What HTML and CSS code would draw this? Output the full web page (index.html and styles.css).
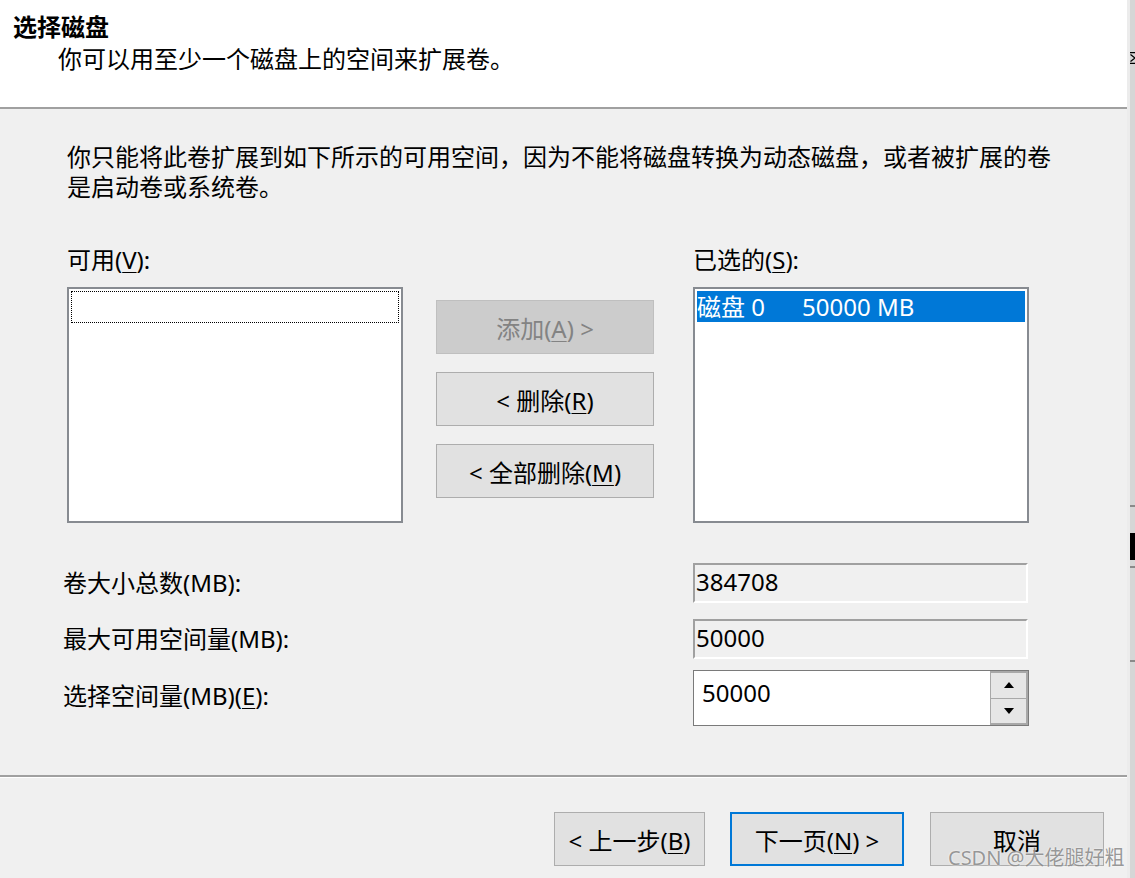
FILE: index.html
```html
<!DOCTYPE html>
<html lang="zh-CN">
<head>
  <meta charset="UTF-8">
  <title>扩展卷向导 - 选择磁盘</title>
  <link rel="stylesheet" href="styles.css">
</head>
<body>

  <div class="screen">
    <div class="dialog">

      <div class="header">
        <div class="title">选择磁盘</div>
        <div class="subtitle">你可以用至少一个磁盘上的空间来扩展卷。</div>
      </div>

      <div class="content">
        <p class="intro">你只能将此卷扩展到如下所示的可用空间，因为不能将磁盘转换为动态磁盘，或者被扩展的卷<br>是启动卷或系统卷。</p>

        <div class="picker">
          <div class="col">
            <div class="label">可用(<u>V</u>):</div>
            <div class="listbox">
              <div class="focus-item"></div>
            </div>
          </div>

          <div class="mid-buttons">
            <button class="btn disabled">添加(<u>A</u>) &gt;</button>
            <button class="btn">&lt; 删除(<u>R</u>)</button>
            <button class="btn">&lt; 全部删除(<u>M</u>)</button>
          </div>

          <div class="col">
            <div class="label">已选的(<u>S</u>):</div>
            <div class="listbox">
              <div class="item selected"><span class="disk">磁盘 0</span>50000 MB</div>
            </div>
          </div>
        </div>

        <div class="fields">
          <div class="field-row">
            <div class="field-label">卷大小总数(MB):</div>
            <div class="readonly">384708</div>
          </div>
          <div class="field-row">
            <div class="field-label">最大可用空间量(MB):</div>
            <div class="readonly">50000</div>
          </div>
          <div class="field-row spin-row">
            <div class="field-label">选择空间量(MB)(<u>E</u>):</div>
            <div class="spinner">
              <div class="spin-value">50000</div>
              <div class="spin-buttons">
                <div class="spin-btn"><span class="tri up"></span></div>
                <div class="spin-btn"><span class="tri down"></span></div>
              </div>
            </div>
          </div>
        </div>
      </div>

      <div class="footer">
        <button class="btn nav">&lt; 上一步(<u>B</u>)</button>
        <button class="btn nav default">下一页(<u>N</u>) &gt;</button>
        <button class="btn nav cancel">取消</button>
      </div>

      <div class="watermark">CSDN @大佬腿好粗</div>
    </div>

    <!-- 右侧露出的另一个窗口 -->
    <div class="edge">
      <svg class="edge-arrow" width="6" height="12" viewBox="0 0 6 12">
        <path d="M0 0.5H6M0.5 2.5L5 6L0.5 9.5M0 11.5H6" fill="none" stroke="#000" stroke-width="1.3"/>
      </svg>
      <span class="edge-line l1"></span>
      <span class="edge-block"></span>
      <span class="edge-line l2"></span>
      <span class="edge-line l3"></span>
    </div>
  </div>

</body>
</html>
```

FILE: styles.css
```css
html, body {
  margin: 0;
  padding: 0;
}

body {
  font-family: "Noto Sans", "Noto Sans CJK SC", sans-serif;
  font-size: 24px;
  color: #000;
  background: #f0f0f0;
}

u {
  text-underline-offset: 3px;
  text-decoration-thickness: 1px;
}

.screen {
  display: flex;
  width: 1135px;
  height: 878px;
  overflow: hidden;
}

.dialog {
  position: relative;
  width: 1127px;
  height: 878px;
  background: #f0f0f0;
  display: flex;
  flex-direction: column;
}

/* 顶部白色标题区 */
.header {
  height: 109px;
  box-sizing: border-box;
  background: #fff;
  border-bottom: 2px solid #a0a0a0;
  padding-top: 12px;
}

.title {
  font-weight: bold;
  padding-left: 13px;
  line-height: 30px;
}

.subtitle {
  padding-left: 58px;
  margin-top: 2px;
  line-height: 30px;
}

.content {
  flex: 1;
  padding-left: 67px;
  border-bottom: 2px solid #a0a0a0;
  box-shadow: 0 1px 0 #fff;
}

.intro {
  margin: 33px 0 0 0;
  line-height: 30px;
}

.picker {
  display: flex;
  margin-top: 43px;
}

.col {
  width: 336px;
}

.label {
  line-height: 30px;
  margin-bottom: 12px;
}

.listbox {
  width: 336px;
  height: 236px;
  box-sizing: border-box;
  border: 2px solid #878b91;
  background: #fff;
  padding: 2px;
}

.focus-item {
  height: 32px;
  border: 1px dotted #000;
  box-sizing: border-box;
}

.item {
  height: 31px;
  line-height: 31px;
  white-space: nowrap;
}

.item.selected {
  background: #0078d7;
  color: #fff;
}

.disk {
  display: inline-block;
  width: 105px;
}

.mid-buttons {
  display: flex;
  flex-direction: column;
  gap: 18px;
  margin: 55px 39px 0 33px;
}

.btn {
  font-family: inherit;
  font-size: 24px;
  width: 218px;
  height: 54px;
  padding: 0;
  background: #e1e1e1;
  border: 1px solid #adadad;
  color: #000;
  cursor: pointer;
}

.btn.disabled {
  background: #cccccc;
  border-color: #bfbfbf;
  color: #838383;
  cursor: default;
}

/* 下方数值区 */
.fields {
  margin-top: 40px;
  margin-left: -4px;
}

.field-row {
  display: flex;
  align-items: center;
  margin-bottom: 16px;
}

.field-row.spin-row {
  margin-top: -5px;
}

.field-label {
  width: 630px;
  line-height: 30px;
}

.spin-row .field-label {
  margin-top: -4px;
}

.readonly {
  width: 335px;
  height: 40px;
  box-sizing: border-box;
  border-top: 2px solid #a0a0a0;
  border-left: 2px solid #a0a0a0;
  border-right: 2px solid #fff;
  border-bottom: 2px solid #fff;
  padding-left: 1px;
  line-height: 34px;
}

.spinner {
  display: flex;
  width: 336px;
  height: 56px;
  box-sizing: border-box;
  border: 1px solid #7a7a7a;
  background: #fff;
}

.spin-value {
  flex: 1;
  padding-left: 8px;
  line-height: 44px;
}

.spin-buttons {
  width: 35px;
  border: 2px solid #a8a8a8;
  border-left-width: 1px;
  display: flex;
  flex-direction: column;
  background: #a8a8a8;
  gap: 1px;
}

.spin-btn {
  flex: 1;
  background: #e6e6e6;
  display: flex;
  align-items: center;
  justify-content: center;
}

.tri {
  width: 0;
  height: 0;
  border-left: 5px solid transparent;
  border-right: 5px solid transparent;
}

.tri.up {
  border-bottom: 6px solid #000;
}

.tri.down {
  border-top: 6px solid #000;
}

/* 底部按钮 */
.footer {
  display: flex;
  justify-content: flex-end;
  padding: 34px 23px 12px 0;
  margin-top: 1px;
}

.btn.nav {
  width: 151px;
  margin-left: 25px;
}

.btn.nav.default {
  width: 174px;
  border: 2px solid #0078d7;
}

.btn.nav.cancel {
  width: 174px;
  margin-left: 26px;
}

.watermark {
  position: absolute;
  left: 948px;
  top: 845px;
  font-size: 20px;
  line-height: 26px;
  color: rgba(120, 120, 120, 0.75);
  text-shadow: 0 0 2px #fff;
  white-space: nowrap;
}

/* 右侧边缘 */
.edge {
  position: relative;
  width: 8px;
  background: #d6d6d6;
  border-left: 3px solid #ececec;
  box-sizing: border-box;
}

.edge-arrow {
  position: absolute;
  left: 0;
  top: 52px;
}

.edge-line {
  position: absolute;
  left: 0;
  width: 5px;
  height: 2px;
  background: #8a8a8a;
}

.edge-line.l1 { top: 505px; }
.edge-line.l2 { top: 566px; }
.edge-line.l3 { top: 660px; }

.edge-block {
  position: absolute;
  left: 0;
  top: 533px;
  width: 5px;
  height: 27px;
  background: #000;
}
```
